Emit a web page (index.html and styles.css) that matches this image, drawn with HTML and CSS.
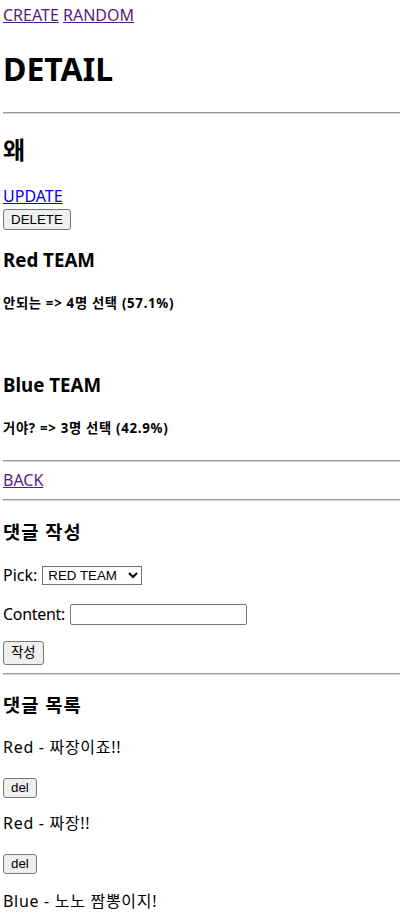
FILE: index.html
```html
<!DOCTYPE html>
<html lang="ko">
<head>
<meta charset="utf-8">
<title>DETAIL</title>
<link rel="stylesheet" href="styles.css">
</head>
<body>
<nav class="nav"><a class="link visited" href="#">CREATE</a> <a class="link visited" href="#">RANDOM</a></nav>
<h1 class="title">DETAIL</h1>
<hr class="rule">
<h2 class="question">왜</h2>
<div class="line"><a class="link" href="#">UPDATE</a></div>
<form class="inline-form"><button class="btn btn-delete" type="button">DELETE</button></form>
<section class="team">
  <h3 class="team-name">Red TEAM</h3>
  <h5 class="team-result">안되는 =&gt; 4명 선택 (57.1%)</h5>
</section>
<section class="team team-gap">
  <h3 class="team-name">Blue TEAM</h3>
  <h5 class="team-result">거야? =&gt; 3명 선택 (42.9%)</h5>
</section>
<hr class="rule">
<div class="line"><a class="link visited" href="#">BACK</a></div>
<hr class="rule">
<h3 class="section-title">댓글 작성</h3>
<form class="comment-form">
  <p class="field field-pick">Pick: <select class="select"><option>RED TEAM</option><option>BLUE TEAM</option></select></p>
  <p class="field field-content"><span class="field-label">Content:</span> <input class="text-input" type="text"></p>
  <div class="submit-line"><button class="btn btn-submit" type="button">작성</button></div>
</form>
<hr class="rule">
<h3 class="section-title">댓글 목록</h3>
<p class="comment">Red - 짜장이죠!!</p>
<form class="inline-form inline-form-small"><button class="btn btn-small" type="button">del</button></form>
<p class="comment">Red - 짜장!!</p>
<form class="inline-form inline-form-small"><button class="btn btn-small" type="button">del</button></form>
<p class="comment comment-last">Blue - 노노 짬뽕이지!</p>
</body>
</html>
```

FILE: styles.css
```css
html, body {
  background: #fff;
}
body {
  margin: 5px 0 0 3px;
  font-family: "Noto Sans", "Noto Sans CJK KR", sans-serif;
  font-size: 16px;
  line-height: 21.3px;
  color: #000;
}
.link {
  color: #0000ee;
  text-decoration: underline;
}
.link.visited {
  color: #551a8b;
}
.title {
  font-size: 32px;
  line-height: 42.6px;
  font-weight: 700;
  margin: 21.44px 0;
}
.rule {
  margin: 8px 0;
  height: 0;
  border: none;
  border-top: 1px solid #9a9a9a;
  border-bottom: 1px solid #d6d6d6;
}
.question {
  font-size: 24px;
  line-height: 32px;
  font-weight: 700;
  margin: 19.92px 0;
}
.inline-form {
  margin: 0;
  height: 22.7px;
  display: flex;
  align-items: flex-start;
  padding-top: 1.7px;
  box-sizing: border-box;
}
.inline-form-small {
  padding-top: 3.4px;
}
.btn {
  font-family: "Liberation Sans", "Noto Sans CJK KR", sans-serif;
  font-size: 13.33px;
  line-height: 15px;
  color: #000;
  background: #efefef;
  border: 1px solid #767676;
  border-radius: 3px;
  padding: 0 7px;
  height: 21px;
  box-sizing: border-box;
}
.btn-small {
  height: 20px;
}
.btn-submit {
  height: 24px;
}
.team-name, .section-title {
  font-size: 18.72px;
  line-height: 24.9px;
  font-weight: 700;
  margin: 18.72px 0;
}
.section-title {
  letter-spacing: 1px;
}
.team-result {
  font-size: 13.28px;
  line-height: 17.7px;
  font-weight: 700;
  margin: 22.18px 0;
  letter-spacing: 0.7px;
}
.team-gap {
  margin-top: 59.8px;
}
.team-gap .team-name {
  margin-top: 0;
}
.field {
  margin: 16px 0;
  display: flex;
  align-items: center;
  gap: 5px;
}
.field-pick {
  height: 24.3px;
}
.field-content {
  height: 21px;
  gap: 5px;
}
.field-label {
  letter-spacing: -0.3px;
}
.select {
  font-family: "Liberation Sans", sans-serif;
  font-size: 13.33px;
  width: 100px;
  height: 19px;
  box-sizing: border-box;
  border: 1px solid #767676;
  border-radius: 0;
  padding: 0 0 0 1px;
  background: #fff;
  color: #000;
}
.text-input {
  width: 177px;
  height: 21px;
  box-sizing: border-box;
  border: 1px solid #767676;
  border-radius: 2px;
  padding: 1px 2px;
  font-family: "Liberation Sans", sans-serif;
  font-size: 13.33px;
  background: #fff;
}
.submit-line {
  height: 24px;
  display: flex;
  align-items: flex-start;
}
.comment {
  margin: 16px 0;
  letter-spacing: 0.7px;
}
.comment-last {
  margin-top: 18px;
}
```
